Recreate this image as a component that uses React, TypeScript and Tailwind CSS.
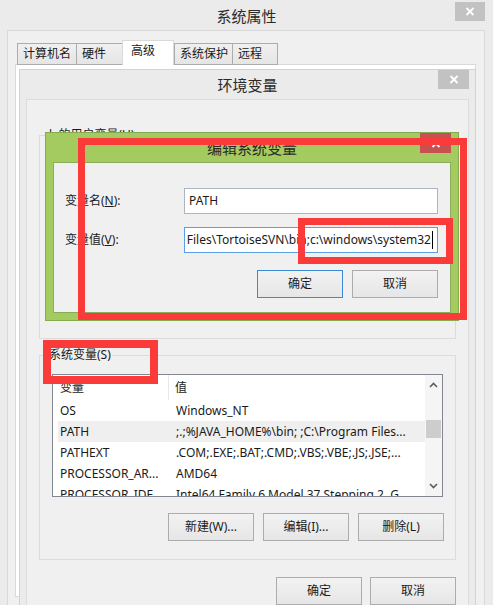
import React, { ReactNode } from 'react'

function CloseButton({ className }: { className: string }) {
  return (
    <div className={`flex items-center justify-center ${className}`}>
      <svg width="10" height="9" viewBox="0 0 10 9">
        <path d="M1.5 1L8.5 8M8.5 1L1.5 8" stroke="white" strokeWidth="1.8" />
      </svg>
    </div>
  )
}

function Button({ children, className = '' }: { children: ReactNode; className?: string }) {
  return (
    <div
      className={`flex items-center justify-center w-[86px] h-[28px] border bg-linear-to-b from-[#f2f2f2] to-[#e6e6e6] ${
        className || 'border-[#acacac]'
      }`}
    >
      {children}
    </div>
  )
}

function Chevron({ down }: { down?: boolean }) {
  return (
    <svg width="9" height="6" viewBox="0 0 9 6">
      <path d={down ? 'M1 1L4.5 4.5L8 1' : 'M1 5L4.5 1.5L8 5'} stroke="#606060" strokeWidth="1.7" fill="none" />
    </svg>
  )
}

const tabs = [
  { label: '计算机名', w: 'w-[60px]' },
  { label: '硬件', w: 'w-[47px]' },
  { label: '高级', w: 'w-[52px]', active: true },
  { label: '系统保护', w: 'w-[59px]' },
  { label: '远程', w: 'w-[46px]' },
]

const rows = [
  ['OS', 'Windows_NT'],
  ['PATH', ';.;%JAVA_HOME%\\bin; ;C:\\Program Files...'],
  ['PATHEXT', '.COM;.EXE;.BAT;.CMD;.VBS;.VBE;.JS;.JSE;...'],
  ['PROCESSOR_AR...', 'AMD64'],
  ['PROCESSOR_IDE...', 'Intel64 Family 6 Model 37 Stepping 2, G...'],
]

function SystemVarList() {
  return (
    <div className="mx-[12px] mt-[11px] h-[123px] border border-[#828790] bg-white flex">
      <div className="flex-1 overflow-hidden">
        <div className="flex h-[25px]">
          <div className="w-[116px] border-r border-[#e8e8e8] pl-[7px] flex items-center">变量</div>
          <div className="pl-[6px] flex items-center">值</div>
        </div>
        {rows.map(([k, v]) => (
          <div
            key={k}
            className={`ml-[5px] h-[21px] flex items-center whitespace-nowrap ${k === 'PATH' ? 'bg-[#efefef]' : ''}`}
          >
            <div className="w-[111px] pl-[2px] shrink-0">{k}</div>
            <div className="pl-[7px]">{v}</div>
          </div>
        ))}
      </div>
      <div className="w-[17px] bg-[#f5f5f5] flex flex-col">
        <div className="h-[20px] flex items-center justify-center">
          <Chevron />
        </div>
        <div className="mt-[25px] mx-px h-[18px] bg-[#cdcdcd]" />
        <div className="flex-1" />
        <div className="h-[20px] flex items-center justify-center">
          <Chevron down />
        </div>
      </div>
    </div>
  )
}

export default function App() {
  return (
    <div className="relative w-[493px] h-[605px] overflow-hidden bg-[#ebebeb] text-[12px] text-[#1a1a1a] font-['Noto_Sans','Noto_Sans_CJK_SC',sans-serif]">
      {/* 系统属性 */}
      <div className="flex h-[30px] items-start">
        <div className="w-[38px]" />
        <div className="flex-1 text-center text-[15px] leading-[32px] text-[#2a2a2a]">系统属性</div>
        <CloseButton className="mt-[2px] mr-[8px] w-[30px] h-[19px] bg-[#c2c2c2]" />
      </div>
      <div className="ml-[7px] mr-[8px] h-[580px] border border-[#d9d9d9] bg-[#f0f0f0] pl-[7px] pr-[8px] pt-[9px]">
        <div className="flex items-end h-[25px] pl-[2px]">
          {tabs.map((t) =>
            t.active ? (
              <div
                key={t.label}
                className={`${t.w} h-[25px] relative z-10 border border-b-0 border-[#d9d9d9] bg-white pl-[8px] pt-[1px]`}
              >
                {t.label}
              </div>
            ) : (
              <div
                key={t.label}
                className={`${t.w} h-[22px] border border-[#acacac] bg-linear-to-b from-[#f0f0f0] to-[#e5e5e5] pl-[5px] leading-[20px] -mr-px`}
              >
                {t.label}
              </div>
            )
          )}
        </div>
        <div className="h-[533px] -mt-px border border-[#d9d9d9] bg-white" />
      </div>

      {/* 环境变量 */}
      <div className="absolute left-[19px] top-[69px] w-[457px] h-[545px] border border-[#d2d2d2] bg-[#ebebeb] flex flex-col">
        <div className="flex h-[29px] items-start">
          <div className="w-[37px]" />
          <div className="flex-1 text-center text-[15px] leading-[31px] text-[#2a2a2a]">环境变量</div>
          <CloseButton className="mr-[6px] w-[31px] h-[19px] bg-[#c2c2c2]" />
        </div>
        <div className="mx-[6px] flex-1 border border-[#dcdcdc] bg-[#f0f0f0] px-[12px] pt-[27px]">
          <fieldset className="h-[212px] border border-[#dcdcdc]">
            <legend className="ml-[8px] px-[1px] leading-[16px]">lx的用户变量(U)</legend>
          </fieldset>
          <fieldset className="mt-[8px] h-[213px] border border-[#dcdcdc]">
            <legend className="ml-[8px] px-[1px] leading-[16px]">系统变量(S)</legend>
            <SystemVarList />
            <div className="flex justify-end gap-[9px] mt-[16px] mr-[11px]">
              <Button>新建(W)...</Button>
              <Button>编辑(I)...</Button>
              <Button>删除(L)</Button>
            </div>
          </fieldset>
          <div className="flex justify-end gap-[8px] mt-[17px]">
            <Button>确定</Button>
            <Button>取消</Button>
          </div>
        </div>
      </div>

      {/* 编辑系统变量 */}
      <div className="absolute left-[45px] top-[132px] w-[414px] h-[189px] border border-[#86aa4f] bg-[#a4cb5f] flex flex-col">
        <div className="flex h-[29px] items-start">
          <div className="w-[38px]" />
          <div className="flex-1 text-center text-[15px] leading-[31px] text-[#2a2a2a]">编辑系统变量</div>
          <CloseButton className="mr-[7px] w-[31px] h-[20px] bg-[#c75050]" />
        </div>
        <div className="mx-[7px] h-[151px] border border-[#8aab58] bg-[#f0f0f0] pt-[25px] pl-[11px] pr-[12px]">
          <div className="flex items-center">
            <div className="w-[119px]">
              变量名(<span className="underline">N</span>):
            </div>
            <div className="flex-1 h-[26px] border border-[#abb5c4] bg-white px-[4px] flex items-center">PATH</div>
          </div>
          <div className="flex items-center mt-[13px]">
            <div className="w-[119px]">
              变量值(<span className="underline">V</span>):
            </div>
            <div className="flex-1 h-[26px] border border-[#5a9fe2] bg-white px-[4px] flex items-center justify-end overflow-hidden whitespace-nowrap">
              <span>{'C:\\Program Files\\TortoiseSVN\\bin;c:\\windows\\system32'}</span>
              <span className="ml-px w-px h-[18px] bg-black shrink-0" />
            </div>
          </div>
          <div className="flex justify-end gap-[9px] mt-[17px]">
            <Button className="border-[#3c8ad6]">确定</Button>
            <Button>取消</Button>
          </div>
        </div>
      </div>

      {/* annotations */}
      <div className="absolute left-[78px] top-[138px] w-[389px] h-[182px] border-[7px] border-[#fb3a3a]" />
      <div className="absolute left-[298px] top-[218px] w-[155px] h-[46px] border-[7px] border-[#fb3a3a]" />
      <div className="absolute left-[43px] top-[340px] w-[115px] h-[44px] border-[8px] border-[#fb3a3a]" />
    </div>
  )
}
